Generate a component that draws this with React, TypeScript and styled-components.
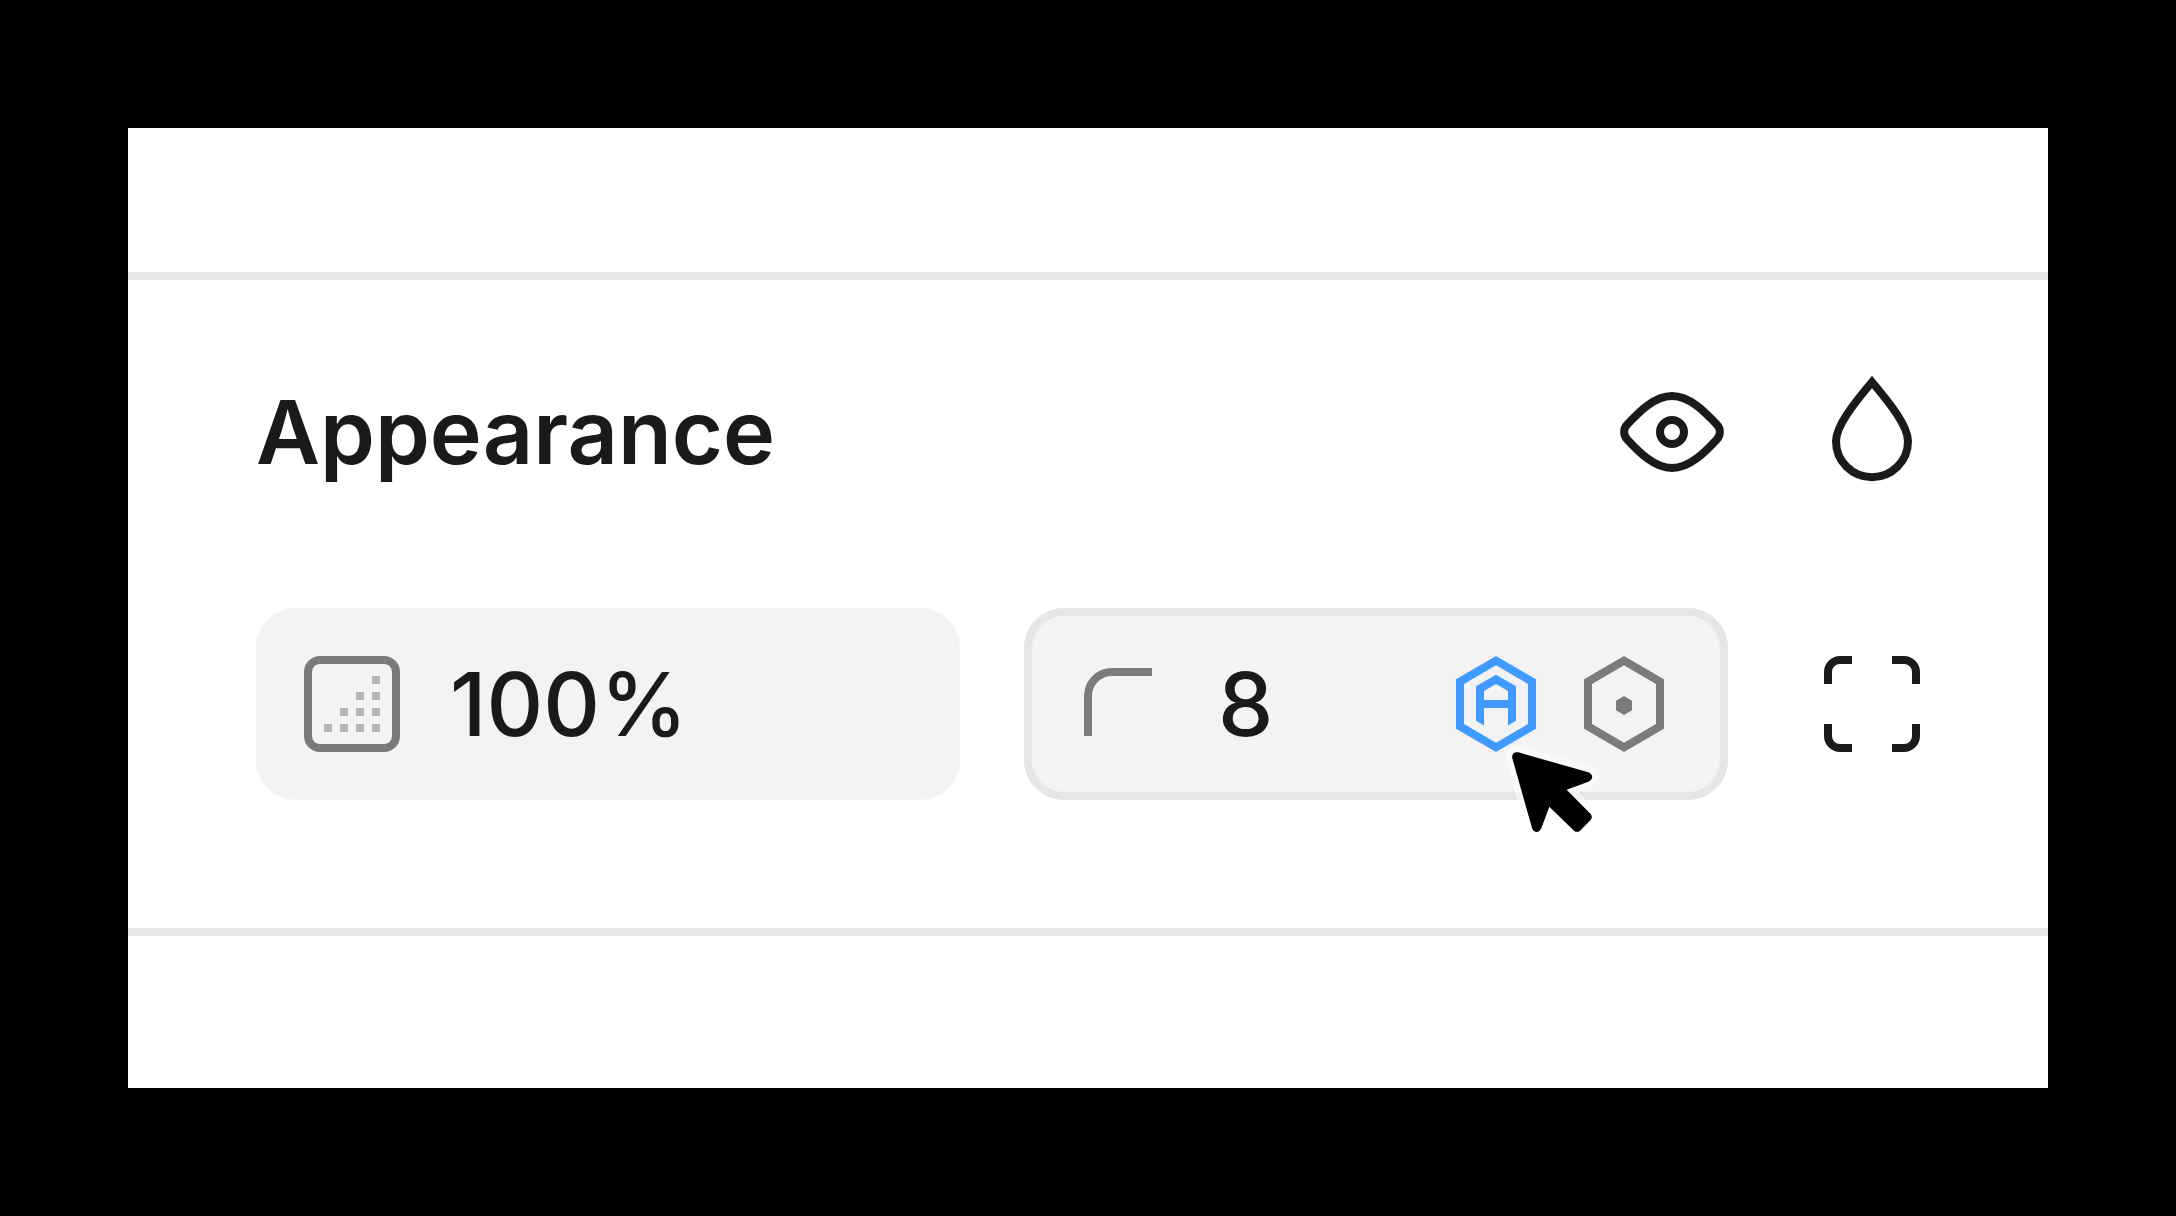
import React, { useState } from "react";
import styled, { createGlobalStyle } from "styled-components";

const GlobalStyle = createGlobalStyle`
  *, *::before, *::after { box-sizing: border-box; }
  body { margin: 0; background: #000; }
`;

const color = {
  ink: "#1a1a1a",
  muted: "#7b7b7b",
  faint: "#b6b6b6",
  line: "#e6e6e6",
  field: "#f3f3f3",
  accent: "#409aff",
};

const Page = styled.main`
  display: flex;
  min-height: 100vh;
  padding: 128px;
  background: #000;
  color: ${color.ink};
  font-family: Inter, "Liberation Sans", sans-serif;
  font-size: 88px;
  line-height: 128px;
`;

const Panel = styled.div`
  display: flex;
  flex: 1;
  flex-direction: column;
  background: #fff;
`;

const PanelEdge = styled.div<{ $grow?: boolean }>`
  flex: ${(p) => (p.$grow ? "1 0 auto" : "none")};
  min-height: 144px;
`;

const Section = styled.section`
  padding: 56px 80px 128px 128px;
  border-top: 8px solid ${color.line};
  border-bottom: 8px solid ${color.line};
`;

const Header = styled.header`
  display: flex;
  align-items: center;
  justify-content: space-between;
  margin-bottom: 80px;
`;

const Title = styled.h2`
  margin: 0;
  font-size: inherit;
  font-weight: 600;
`;

const Actions = styled.div`
  display: flex;
  gap: 8px;
`;

const IconButton = styled.button<{ $compact?: boolean; $color?: string }>`
  display: flex;
  flex: none;
  align-items: center;
  justify-content: center;
  width: ${(p) => (p.$compact ? 128 : 192)}px;
  height: ${(p) => (p.$compact ? 128 : 192)}px;
  padding: 0;
  border: 0;
  background: none;
  color: ${(p) => p.$color ?? color.ink};
`;

const Controls = styled.div`
  display: flex;
  align-items: center;
  gap: 48px;
`;

const Fields = styled.div`
  display: grid;
  flex: 1;
  grid-template-columns: 1fr 1fr;
  gap: 64px;
`;

const Field = styled.div<{ $outlined?: boolean }>`
  display: flex;
  align-items: center;
  min-width: 0;
  height: 192px;
  padding-right: 40px;
  border-radius: 40px;
  background: ${color.field};
  box-shadow: ${(p) => (p.$outlined ? `inset 0 0 0 8px ${color.line}` : "none")};
`;

const FieldLabel = styled.label`
  display: flex;
  flex: none;
  color: ${color.muted};
`;

const FieldInput = styled.input`
  flex: 1;
  min-width: 0;
  width: 0;
  padding: 0 2px;
  border: 0;
  outline: 0;
  background: none;
  color: inherit;
  font: inherit;
  font-weight: 500;
`;

const CursorAnchor = styled.span`
  position: relative;
  display: flex;
`;

const Cursor = styled.svg`
  position: absolute;
  top: 112px;
  left: 80px;
  z-index: 1;
  overflow: visible;
  pointer-events: none;
`;

const Icon = ({ size = 24, children }: { size?: number; children: React.ReactNode }) => (
  <svg
    width={size * 8}
    height={size * 8}
    viewBox={`0 0 ${size} ${size}`}
    fill="none"
    stroke="currentColor"
    aria-hidden="true"
  >
    {children}
  </svg>
);

const EyeIcon = () => (
  <Icon>
    <path d="M6.37 11.1C7.9 9.45 9.8 7.5 12 7.5s4.1 1.95 5.63 3.6a1.33 1.33 0 0 1 0 1.8C16.1 14.55 14.2 16.5 12 16.5s-4.1-1.95-5.63-3.6a1.33 1.33 0 0 1 0-1.8Z" />
    <circle cx="12" cy="12" r="1.5" />
  </Icon>
);

const DropIcon = () => (
  <Icon>
    <path d="M12 5.75C9.6 8.6 7.5 11.3 7.5 13.15a4.5 4.5 0 0 0 9 0C16.5 11.3 14.4 8.6 12 5.75Z" />
  </Icon>
);

const dots = [0, 1, 2, 3].flatMap((row) =>
  [0, 1, 2, 3].filter((col) => col >= 3 - row).map((col) => ({ row, col }))
);

const OpacityIcon = () => (
  <Icon>
    <rect x="6.5" y="6.5" width="11" height="11" rx="1.5" />
    {dots.map(({ row, col }) => (
      <rect
        key={`${row}-${col}`}
        x={8.5 + col * 2}
        y={8.5 + row * 2}
        width="1"
        height="1"
        fill={color.faint}
        stroke="none"
      />
    ))}
  </Icon>
);

const RadiusIcon = () => (
  <Icon>
    <path d="M8 16v-5a3 3 0 0 1 3-3h5" />
  </Icon>
);

const CornersIcon = () => (
  <Icon>
    <path d="M6.5 9.5V8A1.5 1.5 0 0 1 8 6.5h1.5M14.5 6.5H16A1.5 1.5 0 0 1 17.5 8v1.5M17.5 14.5V16a1.5 1.5 0 0 1-1.5 1.5h-1.5M9.5 17.5H8A1.5 1.5 0 0 1 6.5 16v-1.5" />
  </Icon>
);

const Hexagon = () => (
  <path
    fill="currentColor"
    stroke="none"
    fillRule="evenodd"
    d="M8 2l5 2.92v6.16L8 14l-5-2.92V4.92ZM8 3.16L4 5.5v5l4 2.34 4-2.34v-5Z"
  />
);

const AutoIcon = () => (
  <Icon size={16}>
    <Hexagon />
    <path
      fill="currentColor"
      stroke="none"
      d="M8 4.33l2.5 1.46v4.29l-1 .62V8.5h-3v2.2l-1-.62V5.79ZM8 5.49l-1.5.88V7.5h3V6.37Z"
      fillRule="evenodd"
    />
  </Icon>
);

const VariableIcon = () => (
  <Icon size={16}>
    <Hexagon />
    <path fill="currentColor" stroke="none" d="M8 7l1 .58v1.2l-1 .58-1-.58v-1.2Z" />
  </Icon>
);

export default function App() {
  const [opacity, setOpacity] = useState("100%");
  const [radius, setRadius] = useState("8");

  return (
    <>
      <GlobalStyle />
      <Page>
        <Panel>
          <PanelEdge />
          <Section aria-labelledby="appearance-title">
            <Header>
              <Title id="appearance-title">Appearance</Title>
              <Actions>
                <IconButton type="button" aria-label="Toggle visibility">
                  <EyeIcon />
                </IconButton>
                <IconButton type="button" aria-label="Blend mode">
                  <DropIcon />
                </IconButton>
              </Actions>
            </Header>
            <Controls>
              <Fields>
                <Field>
                  <FieldLabel htmlFor="opacity" aria-label="Opacity">
                    <OpacityIcon />
                  </FieldLabel>
                  <FieldInput
                    id="opacity"
                    aria-label="Opacity"
                    value={opacity}
                    onChange={(e) => setOpacity(e.target.value)}
                  />
                </Field>
                <Field $outlined>
                  <FieldLabel htmlFor="radius" aria-label="Corner radius">
                    <RadiusIcon />
                  </FieldLabel>
                  <FieldInput
                    id="radius"
                    aria-label="Corner radius"
                    value={radius}
                    onChange={(e) => setRadius(e.target.value)}
                  />
                  <CursorAnchor>
                    <IconButton type="button" $compact $color={color.accent} aria-label="Auto radius">
                      <AutoIcon />
                    </IconButton>
                    <Cursor width="80" height="80" viewBox="0 0 240 240" aria-hidden="true">
                      <path
                        d="M19 1L226 60C244 65 246 82 229 89L164 113L236 186Q243 195 236 204L204 236Q195 243 186 236L112 164L88 229C82 244 65 244 60 228L1 19C-2 7 7-2 19 1Z"
                        stroke="#fff"
                        strokeOpacity="0.5"
                        strokeWidth="40"
                        strokeLinejoin="round"
                        paintOrder="stroke"
                        fill="#000"
                      />
                    </Cursor>
                  </CursorAnchor>
                  <IconButton type="button" $compact $color={color.muted} aria-label="Apply variable">
                    <VariableIcon />
                  </IconButton>
                </Field>
              </Fields>
              <IconButton type="button" aria-label="Individual corners">
                <CornersIcon />
              </IconButton>
            </Controls>
          </Section>
          <PanelEdge $grow />
        </Panel>
      </Page>
    </>
  );
}
